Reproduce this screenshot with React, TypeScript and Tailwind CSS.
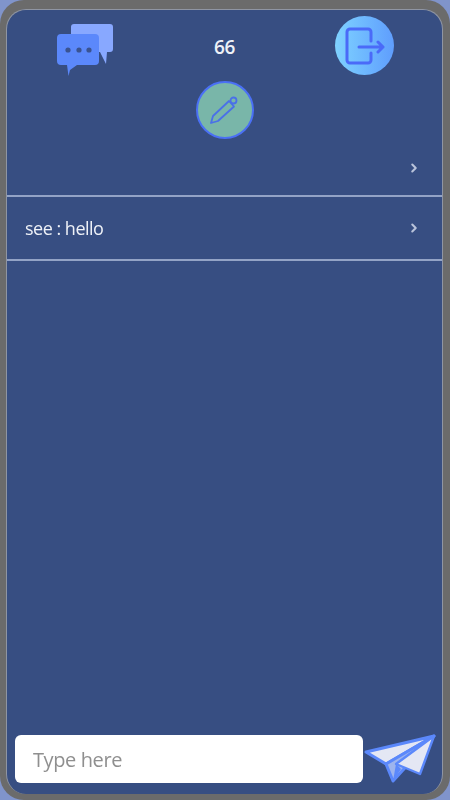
import React from "react";
import { ChevronRight } from "lucide-react";

const ChatIcon = () => (
  <svg width="58" height="54" viewBox="0 0 58 54" fill="none">
    <path d="M18 1h36a3 3 0 0 1 3 3v22a3 3 0 0 1-3 3h-3l-1 12-6-12H18a3 3 0 0 1-3-3V4a3 3 0 0 1 3-3z" fill="#88a8ff" />
    <path d="M5 11h34a4 4 0 0 1 4 4v23a4 4 0 0 1-4 4H21l-7 5-1.5 6-1.5-11H5a4 4 0 0 1-4-4V15a4 4 0 0 1 4-4z" fill="#5b88fb" />
    <circle cx="12" cy="27" r="2.6" fill="#3a5391" />
    <circle cx="23" cy="27" r="2.6" fill="#3a5391" />
    <circle cx="33" cy="27" r="2.6" fill="#3a5391" />
  </svg>
);

const LogoutIcon = () => (
  <div className="flex h-[59px] w-[59px] items-center justify-center rounded-full bg-gradient-to-r from-[#7fd2ff] to-[#5f9dfd]">
    <svg width="40" height="38" viewBox="0 0 40 38" fill="none" stroke="#4a6af8" strokeWidth="3" strokeLinecap="round" strokeLinejoin="round" className="ml-[1px]">
      <path d="M26 14V5a3 3 0 0 0-3-3H5a3 3 0 0 0-3 3v28a3 3 0 0 0 3 3h18a3 3 0 0 0 3-3v-7" />
      <path d="M14 20h24M33 15l5 5-5 5" />
    </svg>
  </div>
);

const PencilIcon = () => (
  <div className="flex h-[58px] w-[58px] items-center justify-center rounded-full border-[2.5px] border-[#4a70f5] bg-[#79b6a9]">
    <svg width="30" height="30" viewBox="0 0 30 30" fill="none" stroke="#4a70e8" strokeWidth="1.8" strokeLinejoin="round">
      <path d="M1 28l2-7L19 6l5 5.5L8 26z" />
      <circle cx="23.5" cy="5.5" r="3" />
    </svg>
  </div>
);

const SendIcon = () => (
  <svg width="72" height="50" viewBox="0 0 72 50" fill="none" strokeLinejoin="round">
    <path d="M2 18L70 2 22 30z" fill="#e4e7f4" stroke="#5b88fb" strokeWidth="3" />
    <path d="M22 30l7 17L70 2z" fill="#9db4ee" stroke="#5b88fb" strokeWidth="3" />
    <path d="M32 30L70 2 56 40z" fill="#e4e7f4" stroke="#5b88fb" strokeWidth="2.4" />
    <path d="M29 47l8-12-5-5z" fill="#5b88fb" />
  </svg>
);

const Row = ({ text, size }: { text?: string; size: string }) => (
  <div className={`flex items-center justify-between border-b-2 border-[#93a3c6] pl-[18px] pr-[21px] ${size}`}>
    <span className="text-[18px] font-medium tracking-[-0.5px] text-[#eef1f7]">{text}</span>
    <ChevronRight size={14} strokeWidth={3.5} className="text-[#b9c3da]" />
  </div>
);

export default function App() {
  return (
    <div className="h-screen w-full bg-[#8094cb] font-['Open_Sans',sans-serif]">
      <div className="h-full rounded-[24px] bg-[#6b6b6b] pb-[6px] pl-[6px] pr-[7px] pt-[9px] blur-[0.5px]">
        <div className="flex h-full flex-col rounded-[20px] border border-b-0 border-[#8f95a3] bg-[#374e82]">
          <div className="grid grid-cols-3 items-start pt-[6px]">
            <div className="flex justify-center pl-[11px] pt-[7px]">
              <ChatIcon />
            </div>
            <div className="flex justify-center pt-[17px] text-[19px] font-semibold tracking-[-0.3px] text-[#eef1f7]">66</div>
            <div className="flex justify-center pr-[10px]">
              <LogoutIcon />
            </div>
          </div>
          <div className="flex justify-center pt-[4px]">
            <PencilIcon />
          </div>
          <Row size="h-[58px] pt-[2px]" />
          <Row text="see : hello" size="h-[64px]" />
          <div className="flex-1" />
          <div className="flex items-center gap-[1px] pb-[10px] pl-2 pr-[6px]">
            <input
              placeholder="Type here"
              className="h-12 flex-1 rounded-md bg-white px-[18px] text-[20px] tracking-[-0.4px] outline-none placeholder:text-[#8f8f8f]"
            />
            <SendIcon />
          </div>
        </div>
      </div>
    </div>
  );
}
